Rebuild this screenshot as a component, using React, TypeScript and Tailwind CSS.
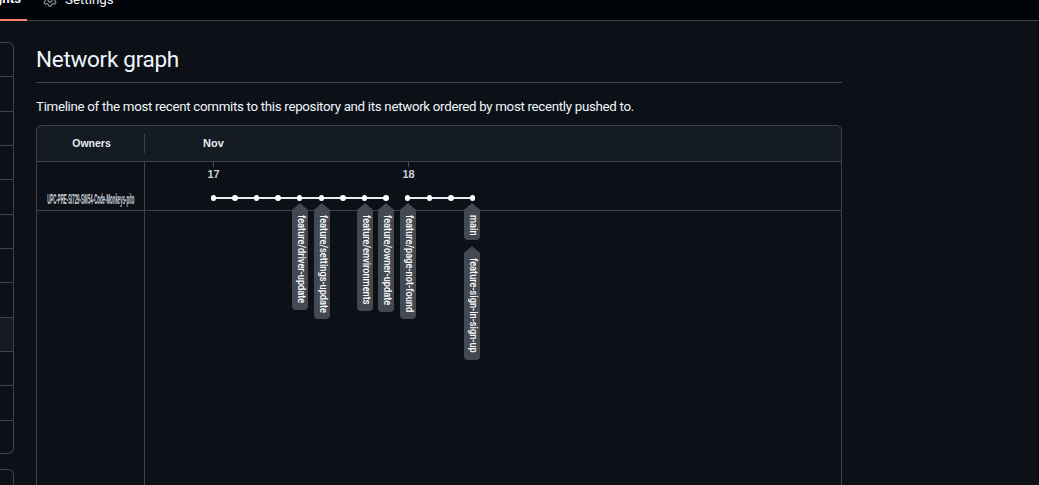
const sans = "font-['Liberation_Sans',Arial,sans-serif]";
const ui = "font-['Roboto','Noto_Sans',sans-serif]";

const dots = [213.5, 235, 256.7, 278.2, 299.5, 321.3, 343, 364.4, 386, 407.7, 429.3, 451, 472.3];

const labels = [
  { x: 300, top: 203, bottom: 310, text: "feature/driver-update" },
  { x: 321.5, top: 203, bottom: 319, text: "feature/settings-update" },
  { x: 364.5, top: 203, bottom: 311, text: "feature/environments" },
  { x: 386, top: 203, bottom: 312, text: "feature/owner-update" },
  { x: 408, top: 203, bottom: 319, text: "feature/page-not-found" },
  { x: 472, top: 203, bottom: 240, text: "main" },
  { x: 472, top: 246, bottom: 360, text: "feature-sign-in-sign-up" },
];

const ticks = [
  { x: 213, c: 213.5, t: "17" },
  { x: 408, c: 408.5, t: "18" },
];

function Label({ x, top, bottom, text }: { x: number; top: number; bottom: number; text: string }) {
  return (
    <div className="absolute w-4" style={{ left: x - 8, top, height: bottom - top }}>
      <svg className="absolute left-0 top-0" width="16" height="8" viewBox="0 0 16 8">
        <path d="M8 0 L16 7 L16 8 L0 8 L0 7 Z" fill="#444951" />
      </svg>
      <div className="absolute left-0 right-0 top-[5px] bottom-0 rounded-[4px] bg-[#444951]" />
      <span
        className={`absolute left-[4px] top-[12px] block origin-top whitespace-nowrap text-[11px] font-medium leading-[10px] text-white ${ui} [transform:scaleY(0.84)] [writing-mode:vertical-rl]`}
      >
        {text}
      </span>
    </div>
  );
}

export default function App() {
  const rows = Array.from({ length: 12 });
  return (
    <div className={`flex h-[485px] w-[1039px] flex-col overflow-hidden bg-[#0d1117] text-white ${ui}`}>
      <nav className="relative flex h-[21px] shrink-0 items-end border-b border-[#3d444d] bg-[#010409]">
        <div className="relative -mb-px flex h-[21px] w-[27px] shrink-0 items-end justify-end overflow-hidden border-b-2 border-[#f78166] pr-[6px]">
          <span className="mb-[10px] whitespace-nowrap text-[13.3px] font-bold leading-5 text-[#f0f6fc]">Insights</span>
        </div>
        <div className="relative ml-[16px] flex h-[20px] items-end gap-2 overflow-hidden">
          <svg className="mb-[13px] shrink-0" width="14" height="14" viewBox="0 0 16 16" fill="#7d8590">
            <path d="M8 0a8.2 8.2 0 0 1 .701.031C9.444.095 9.99.645 10.16 1.29l.288 1.107c.018.066.079.158.212.224.231.114.454.243.668.386.123.082.233.09.299.071l1.103-.303c.644-.176 1.392.021 1.82.63.27.385.506.792.704 1.218.315.675.111 1.422-.364 1.891l-.814.806c-.049.048-.098.147-.088.294.016.257.016.515 0 .772-.01.147.038.246.088.294l.814.806c.475.469.679 1.216.364 1.891a7.977 7.977 0 0 1-.704 1.217c-.428.61-1.176.807-1.82.63l-1.102-.302c-.067-.019-.177-.011-.3.071a5.909 5.909 0 0 1-.668.386c-.133.066-.194.158-.211.224l-.29 1.106c-.168.646-.715 1.196-1.458 1.26a8.006 8.006 0 0 1-1.402 0c-.743-.064-1.289-.614-1.458-1.26l-.289-1.106c-.018-.066-.079-.158-.212-.224a5.738 5.738 0 0 1-.668-.386c-.123-.082-.233-.09-.299-.071l-1.103.303c-.644.176-1.392-.021-1.82-.63a8.12 8.12 0 0 1-.704-1.218c-.315-.675-.111-1.422.363-1.891l.815-.806c.05-.048.098-.147.088-.294a6.214 6.214 0 0 1 0-.772c.01-.147-.038-.246-.088-.294l-.815-.806C.635 6.045.431 5.298.746 4.623a7.92 7.92 0 0 1 .704-1.217c.428-.61 1.176-.807 1.82-.63l1.102.302c.067.019.177.011.3-.071.214-.143.437-.272.668-.386.133-.066.194-.158.211-.224l.29-1.106C6.009.645 6.556.095 7.299.03 7.53.01 7.764 0 8 0Zm-.571 1.525c-.036.003-.108.036-.137.146l-.289 1.105c-.147.561-.549.967-.998 1.189-.173.086-.34.183-.5.29-.417.278-.97.423-1.529.27l-1.103-.303c-.109-.03-.175.016-.195.045-.22.312-.412.644-.573.99-.014.031-.021.11.059.19l.815.806c.411.406.562.957.53 1.456a4.709 4.709 0 0 0 0 .582c.032.499-.119 1.05-.53 1.456l-.815.806c-.081.08-.073.159-.059.19.162.346.353.677.573.989.02.03.085.076.195.046l1.102-.303c.56-.153 1.113-.008 1.53.27.161.107.328.204.501.29.447.222.85.629.997 1.189l.289 1.105c.029.109.101.143.137.146a6.6 6.6 0 0 0 1.142 0c.036-.003.108-.036.137-.146l.289-1.105c.147-.561.549-.967.998-1.189.173-.086.34-.183.5-.29.417-.278.97-.423 1.529-.27l1.103.303c.109.029.175-.016.195-.045.22-.313.411-.644.573-.99.014-.031.021-.11-.059-.19l-.815-.806c-.411-.406-.562-.957-.53-1.456a4.709 4.709 0 0 0 0-.582c-.032-.499.119-1.05.53-1.456l.815-.806c.081-.08.073-.159.059-.19a6.464 6.464 0 0 0-.573-.989c-.02-.03-.085-.076-.195-.046l-1.102.303c-.56.153-1.113.008-1.53-.27a4.44 4.44 0 0 0-.501-.29c-.447-.222-.85-.629-.997-1.189l-.289-1.105c-.029-.11-.101-.143-.137-.146a6.6 6.6 0 0 0-1.142 0ZM11 8a3 3 0 1 1-6 0 3 3 0 0 1 6 0ZM9.5 8a1.5 1.5 0 1 0-3.001.001A1.5 1.5 0 0 0 9.5 8Z" />
          </svg>
          <span className="mb-[10px] whitespace-nowrap text-[13.3px] leading-5 text-[#f0f6fc]">Settings</span>
        </div>
      </nav>

      <div className="flex min-h-0 flex-1">
        <aside className="mt-[21px] flex w-[14px] shrink-0 flex-col gap-[15px]">
          <div className="flex h-[412px] shrink-0 flex-col overflow-hidden rounded-r-md border-y border-r border-[#3d444d]">
            {rows.map((_, i) => (
              <div
                key={i}
                className={`h-[34.33px] shrink-0 border-b border-[#3d444d] last:border-b-0 ${i === 8 ? "bg-[#151b23]" : ""}`}
              />
            ))}
          </div>
          <div className="h-[40px] shrink-0 rounded-r-md border-y border-r border-[#3d444d]" />
        </aside>

        <main className="ml-[22px] flex w-[806px] shrink-0 flex-col">
          <div className="border-b border-[#3d444d] pt-[23px] pb-[8px]">
            <h2 className="text-[22.5px] font-normal leading-[30px] tracking-[-0.3px] text-[#f0f6fc]">Network graph</h2>
          </div>
          <p className="mt-[15px] text-[13.3px] leading-[18px] tracking-[-0.3px] text-[#f0f6fc]">
            Timeline of the most recent commits to this repository and its network ordered by most recently pushed to.
          </p>
          <div className="relative mt-[9px] flex-1 rounded-t-md border border-b-0 border-[#3d444d]">
            <div className={`flex h-[36px] items-center rounded-t-md border-b border-[#3d444d] bg-[#151b23] ${sans}`}>
              <div className="flex h-[19px] w-[108px] shrink-0 items-center justify-center border-r border-[#3d444d] pl-[2px] text-[10.5px] font-bold text-[#e6edf3]">
                Owners
              </div>
              <span className="ml-[58px] text-[11px] font-bold text-[#e6edf3]">Nov</span>
            </div>
            <div className="flex h-[49px] border-b border-[#3d444d]">
              <div className={`flex w-[108px] shrink-0 items-end justify-center border-r border-[#3d444d] pb-[4px] ${sans}`}>
                <span className="block shrink-0 whitespace-nowrap text-[14px] font-bold leading-[14px] text-[#c9d1d9] [transform:scaleX(0.31)]">
                  UPC-PRE-SI729-SW54-Code-Monkeys-pito
                </span>
              </div>
            </div>
            <div className="absolute bottom-0 left-[107px] top-[85px] w-px bg-[#3d444d]" />

            {/* Graph canvas: coordinates are page coordinates offset by the box origin */}
            <div className={`absolute left-[-37px] top-[-126px] ${sans}`}>
              {ticks.map((k) => (
                <div key={k.t}>
                  <div className="absolute h-[5px] w-px bg-[#444c56]" style={{ left: k.x, top: 162 }} />
                  <span
                    className="absolute w-[30px] text-center text-[11px] font-bold leading-[12px] text-[#c9d1d9]"
                    style={{ left: k.c - 15, top: 168 }}
                  >
                    {k.t}
                  </span>
                </div>
              ))}
              <div className="absolute h-[2px] bg-[#e6edf3]" style={{ left: 214, width: 172, top: 197 }} />
              <div className="absolute h-[2px] bg-[#e6edf3]" style={{ left: 408, width: 64, top: 197 }} />
              {dots.map((x) => (
                <div
                  key={x}
                  className="absolute h-[5.5px] w-[5.5px] rounded-full bg-white"
                  style={{ left: x - 2.75, top: 195.25 }}
                />
              ))}
              {labels.map((l) => (
                <Label key={l.text} x={l.x} top={l.top} bottom={l.bottom} text={l.text} />
              ))}
            </div>
          </div>
        </main>
      </div>
    </div>
  );
}
